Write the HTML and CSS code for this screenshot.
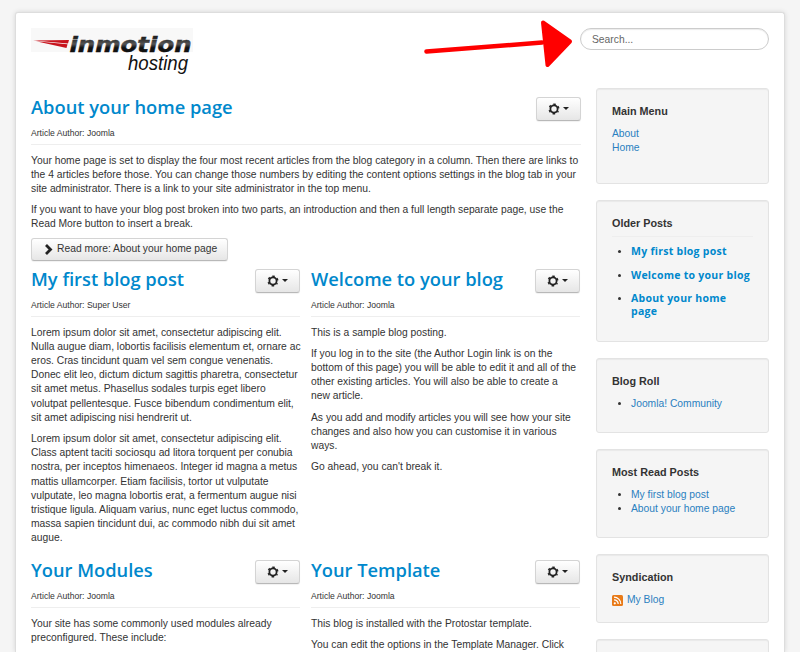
FILE: index.html
```html
<!DOCTYPE html>
<html lang="en">
<head>
<meta charset="utf-8">
<title>My Blog</title>
<link rel="stylesheet" href="styles.css">
</head>
<body>
<svg width="0" height="0" class="defs">
  <symbol id="gear" viewBox="0 0 16 16"><g fill="none" stroke="#222"><circle cx="8" cy="8" r="4.800" stroke-width="2.400"/><circle cx="8" cy="8" r="6.400" stroke-width="2" stroke-dasharray="3.100 3.602" stroke-dashoffset="1.550" transform="rotate(30 8 8)"/></g></symbol>
</svg>
<div class="page">
  <header>
    <svg class="logo" width="166" height="50" viewBox="0 0 166 50" role="img" aria-label="inmotion hosting">
      <defs><linearGradient id="ink" x1="0" y1="0" x2="0" y2="1"><stop offset="0.25" stop-color="#222"/><stop offset="0.5" stop-color="#555"/><stop offset="0.65" stop-color="#111"/></linearGradient></defs>
      <rect width="162" height="24" fill="#f8f8f8"/>
      <path d="M2 12.500 38 12 37 15.500z" fill="#c8141e"/>
      <path d="M5 13.300 36.500 16.200 35.500 20z" fill="#c8141e"/>
      <text x="38.500" y="23.500" class="logo-main" fill="url(#ink)" stroke="url(#ink)" stroke-width="0.500" textLength="122" lengthAdjust="spacingAndGlyphs">inmotion</text>
      <text x="97" y="42" class="logo-sub" textLength="60" lengthAdjust="spacingAndGlyphs">hosting</text>
    </svg>
    <input class="search" type="text" placeholder="Search..." aria-label="Search">
  </header>
  <div class="columns">
    <main>
      <article class="lead">
        <div class="head"><h2>About your home page</h2><button class="btn tool"><svg width="12" height="12"><use href="#gear"/></svg><i></i></button></div>
        <div class="author">Article Author: Joomla</div>
        <p>Your home page is set to display the four most recent articles from the blog category in a column. Then there are links to<br>the 4 articles before those. You can change those numbers by editing the content options settings in the blog tab in your<br>site administrator. There is a link to your site administrator in the top menu.</p>
        <p>If you want to have your blog post broken into two parts, an introduction and then a full length separate page, use the<br>Read More button to insert a break.</p>
        <button class="btn more"><svg width="9" height="11" viewBox="0 0 9 11"><path d="M2 1 6.500 5.500 2 10" fill="none" stroke="#222" stroke-width="2.800"/></svg>Read more: About your home page</button>
      </article>
      <div class="row first">
        <article>
          <div class="head"><h2>My first blog post</h2><button class="btn tool"><svg width="12" height="12"><use href="#gear"/></svg><i></i></button></div>
          <div class="author">Article Author: Super User</div>
          <p>Lorem ipsum dolor sit amet, consectetur adipiscing elit.<br>Nulla augue diam, lobortis facilisis elementum et, ornare ac<br>eros. Cras tincidunt quam vel sem congue venenatis.<br>Donec elit leo, dictum dictum sagittis pharetra, consectetur<br>sit amet metus. Phasellus sodales turpis eget libero<br>volutpat pellentesque. Fusce bibendum condimentum elit,<br>sit amet adipiscing nisi hendrerit ut.</p>
          <p>Lorem ipsum dolor sit amet, consectetur adipiscing elit.<br>Class aptent taciti sociosqu ad litora torquent per conubia<br>nostra, per inceptos himenaeos. Integer id magna a metus<br>mattis ullamcorper. Etiam facilisis, tortor ut vulputate<br>vulputate, leo magna lobortis erat, a fermentum augue nisi<br>tristique ligula. Aliquam varius, nunc eget luctus commodo,<br>massa sapien tincidunt dui, ac commodo nibh dui sit amet<br>augue.</p>
        </article>
        <article>
          <div class="head"><h2>Welcome to your blog</h2><button class="btn tool"><svg width="12" height="12"><use href="#gear"/></svg><i></i></button></div>
          <div class="author">Article Author: Joomla</div>
          <p>This is a sample blog posting.</p>
          <p>If you log in to the site (the Author Login link is on the<br>bottom of this page) you will be able to edit it and all of the<br>other existing articles. You will also be able to create a<br>new article.</p>
          <p>As you add and modify articles you will see how your site<br>changes and also how you can customise it in various<br>ways.</p>
          <p>Go ahead, you can't break it.</p>
        </article>
      </div>
      <div class="row">
        <article>
          <div class="head"><h2>Your Modules</h2><button class="btn tool"><svg width="12" height="12"><use href="#gear"/></svg><i></i></button></div>
          <div class="author">Article Author: Joomla</div>
          <p>Your site has some commonly used modules already<br>preconfigured. These include:</p>
        </article>
        <article>
          <div class="head"><h2>Your Template</h2><button class="btn tool"><svg width="12" height="12"><use href="#gear"/></svg><i></i></button></div>
          <div class="author">Article Author: Joomla</div>
          <p>This blog is installed with the Protostar template.</p>
          <p>You can edit the options in the Template Manager. Click</p>
        </article>
      </div>
    </main>
    <aside>
      <section class="well menu"><h3>Main Menu</h3><a>About</a><a>Home</a></section>
      <section class="well older"><h3>Older Posts</h3><ul><li><a>My first blog post</a></li><li><a>Welcome to your blog</a></li><li><a>About your home<br>page</a></li></ul></section>
      <section class="well roll"><h3>Blog Roll</h3><ul><li><a>Joomla! Community</a></li></ul></section>
      <section class="well read"><h3>Most Read Posts</h3><ul><li><a>My first blog post</a></li><li><a>About your home page</a></li></ul></section>
      <section class="well feed"><h3>Syndication</h3><a><svg width="11" height="11" viewBox="0 0 11 11"><rect width="11" height="11" rx="1.500" fill="#e87a18"/><circle cx="2.800" cy="8.300" r="1.100" fill="#fff"/><path d="M2 4.800a4.200 4.200 0 0 1 4.200 4.200M2 2.200A6.800 6.800 0 0 1 8.800 9" fill="none" stroke="#fff" stroke-width="1.200"/></svg>My Blog</a></section>
      <section class="well last"></section>
    </aside>
  </div>
  <svg class="arrow" width="152" height="52" viewBox="0 0 152 52"><path d="M4.500 33.500 120 24.500" stroke="#f00" stroke-width="4.500" stroke-linecap="round"/><path d="M121 4.500 148 23.500 125.500 47z" fill="#f00" stroke="#f00" stroke-width="4" stroke-linejoin="round"/></svg>
</div>
</body>
</html>
```
FILE: styles.css
```css
* { box-sizing: border-box; }
body {
  margin: 0;
  height: 652px;
  overflow: hidden;
  background: #f5f5f5;
  color: #333;
  font: 10.3px/14.2px "Liberation Sans", Arial, sans-serif;
}
.defs { display: block; }
.page {
  position: relative;
  width: 770px;
  height: 640px;
  overflow: hidden;
  margin: 12px 0 0 15px;
  padding: 15px 15px 0;
  background: #fff;
  border: 1px solid #ddd;
  border-bottom: 0;
  border-radius: 3px 3px 0 0;
  box-shadow: 0 0 5px rgba(0, 0, 0, 0.13);
}
header { display: flex; justify-content: space-between; height: 60px; }
.logo-main { font: italic 700 22px "DejaVu Sans", sans-serif; }
.logo-sub { font: italic 20px "Liberation Sans", sans-serif; fill: #111; }
.search {
  width: 189px;
  height: 22px;
  padding: 0 11px;
  border: 1px solid #ccc;
  border-radius: 11px;
  box-shadow: inset 0 1px 1px rgba(0, 0, 0, 0.08);
  font: inherit;
}
.search::placeholder { color: #666; }
.arrow { position: absolute; left: 406px; top: 5px; }
.columns { display: flex; gap: 15px; }
main { width: 550px; padding-top: 8px; }
.head { display: flex; justify-content: space-between; height: 24px; }
h2 { margin: 0; font: 600 18.3px/22px "Open Sans", sans-serif; color: #08c; white-space: nowrap; }
.author { height: 25px; padding-top: 7px; font-size: 8.6px; line-height: 13px; border-bottom: 1px solid #eee; margin-bottom: 8.500px; }
p { margin: 0 0 7.100px; white-space: nowrap; }
.row { display: flex; gap: 11px; }
.row article { width: 269px; }
.lead { height: 172px; }
.first { height: 291px; }
.btn {
  display: flex;
  align-items: center;
  font: inherit;
  color: #333;
  border: 1px solid #d4d4d4;
  border-bottom-color: #b8b8b8;
  border-radius: 3px;
  background: linear-gradient(#fff, #e6e6e6);
  box-shadow: 0 1px 1px rgba(0, 0, 0, 0.06);
  white-space: nowrap;
}
.tool { width: 45px; height: 24px; margin-top: 1px; padding: 0 0 1px; justify-content: center; gap: 3px; }
.tool i { border: 3px solid transparent; border-top-color: #222; border-bottom: 0; }
.more { width: 197px; height: 23px; margin-top: -1px; padding: 0 0 0 12px; gap: 4px; }
aside { width: 173px; }
.well { margin-bottom: 16px; padding: 14px 15px 0; background: #f5f5f5; border: 1px solid #e3e3e3; border-radius: 3px; box-shadow: inset 0 1px 1px rgba(0, 0, 0, 0.05); }
.well h3 { margin: 0 0 8px; font-size: 10.8px; line-height: 16px; }
.well a { color: #2a7fc0; display: block; white-space: nowrap; }
.well ul { margin: 0; padding-left: 19px; }
.menu { height: 96px; }
.older { height: 142px; }
.older h3 { height: 22px; border-bottom: 1px solid #eee; margin-bottom: 8px; }
.older li { margin-bottom: 11px; line-height: 12.600px; font-weight: 600; }
.older a { font: 700 10.5px/12.600px "Open Sans", sans-serif; color: #08c; letter-spacing: 0.26px; }
.roll { height: 75px; }
.read { height: 89px; }
.feed { height: 69px; }
.feed a { display: flex; align-items: center; gap: 4px; }
.last { height: 60px; }
```
